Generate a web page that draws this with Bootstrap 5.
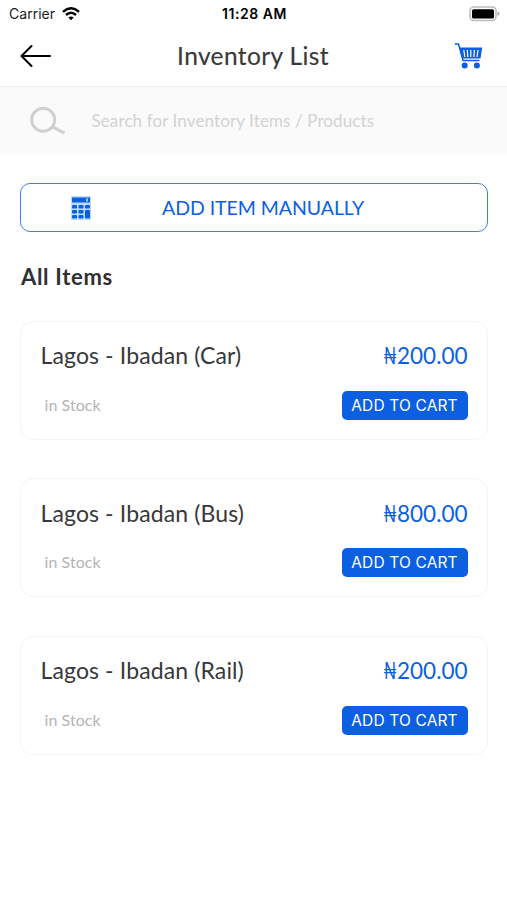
<!DOCTYPE html>
<html lang="en">
<head>
<meta charset="utf-8">
<meta name="viewport" content="width=device-width, initial-scale=1">
<title>Inventory List</title>
<link href="https://cdn.jsdelivr.net/npm/bootstrap@5.3.0/dist/css/bootstrap.min.css" rel="stylesheet">
<style>
  :root { --brand: #0b5fe0; }
  body { font-family: Lato, "Open Sans", sans-serif; color: #38383a; background: #fff; white-space: nowrap; }
  svg { display: block; flex: none; }
  .statusbar { height: 27px; padding: 0 7px 0 9px; font-family: Inter, sans-serif; font-size: 14px; line-height: 27px; color: #1c1c1e; }
  .statusbar .carrier { letter-spacing: .02px; margin-right: -1px; }
  .statusbar .clock { font-size: 14px; letter-spacing: .55px; }
  .titlebar { height: 60px; padding: 0 24px 1px 20px; border-bottom: 1px solid #ececec; }
  .titlebar h1 { font-size: 24.5px; font-weight: 400; -webkit-text-stroke: .15px; letter-spacing: .38px; }
  .searchbar { height: 67px; padding: 0 30px 0 28px; background: #fafafa; gap: 25.5px; }
  .searchbar input, .searchbar input:focus { font-size: 17px; letter-spacing: .11px; color: #999; background: none; box-shadow: none; }
  .searchbar input::placeholder { color: #d2d2d2; opacity: 1; }
  .content { padding: 29px 19.5px 0 20px; }
  .manual { height: 49px; border: 1.5px solid #3f80e6; border-radius: 10px; color: var(--brand); font-size: 19.5px; padding: 1px 50px 0; }
  .manual .label-text { margin-left: 71px; letter-spacing: -.05px; }
  .section-title { font-size: 22px; font-weight: 700; line-height: 30px; margin: 30px 0 28.5px 1px; color: #303033; letter-spacing: .7px; }
  .item { height: 119px; border: 1.5px solid #f4f4f4; border-radius: 13px; padding: 17.5px 19px 19px 19.5px; margin-bottom: 38.6px; }
  .item-name { font-size: 23px; line-height: 33px; letter-spacing: .12px; }
  .price { font-size: 22.5px; line-height: 34px; letter-spacing: -.02px; color: var(--brand); margin-bottom: -2px; }
  .naira { display: inline-block; transform: scaleX(.76); transform-origin: right; margin-right: .5px; }
  .stock { font-size: 16px; color: #b4b4b4; margin: -1px 0 0 4px; letter-spacing: .05px; }
  .cart-btn { height: 29px; width: 126px; padding: 0; border: 0; border-radius: 5px; background: var(--brand); color: #fff; font: 400 15.5px/30px Inter, sans-serif; letter-spacing: .15px; }
</style>
<script src="https://cdn.jsdelivr.net/npm/bootstrap@5.3.0/dist/js/bootstrap.bundle.min.js" defer></script>
</head>
<body>
<div class="statusbar d-flex align-items-center">
  <div class="col d-flex align-items-center gap-2"><span class="carrier">Carrier</span>
    <svg width="18" height="14" viewBox="0 0 18 14" fill="none" stroke="#000" stroke-width="2.500"><path d="M1 4.900Q9-2.300 17 4.900M4 8Q9 3.600 14 8"/><path d="M6.400 10.500Q9 8.300 11.600 10.500L9 13.200Z" fill="#000" stroke="none"/></svg>
  </div>
  <div class="clock fw-semibold text-black">11:28 AM</div>
  <div class="col d-flex justify-content-end">
    <svg width="32" height="16" viewBox="0 0 32 16"><rect x="2" y="1" width="26" height="13.500" rx="4" fill="#fff" stroke="#bdbdbd" stroke-width="1.600"/><rect x="4" y="3.200" width="22" height="9.200" rx="1.500"/><path d="M29.500 5.500q2 .6 2 2.200t-2 2.200z" fill="#aaa"/></svg>
  </div>
</div>
<header class="titlebar d-flex align-items-center justify-content-between">
  <svg width="32" height="24" viewBox="0 0 32 24" fill="none" stroke="#000" stroke-width="2.100" stroke-linecap="round" stroke-linejoin="round"><path d="M30 12H1.500M11.500 2 1.500 12l10 10"/></svg>
  <h1 class="m-0">Inventory List</h1>
  <svg width="29" height="28" viewBox="0 0 29 28" fill="none" stroke="#0b5fe0"><path d="M.8 2h3.700l4.500 16.500h16.500" stroke-width="1.500"/><path fill="#0b5fe0" stroke="none" d="M5.500 5.500h22.700l-1.700 11H8.300z"/><path d="m9.800 8 1 7M13.300 8l.5 7M16.800 8v7M20.400 8l-.5 7M24 8l-1 7" stroke="#fff" stroke-width="1.200"/><circle cx="10.700" cy="23.500" r="3" fill="#0b5fe0" stroke="none"/><circle cx="22.900" cy="23.500" r="3" fill="#0b5fe0" stroke="none"/></svg>
</header>
<div class="searchbar d-flex align-items-center">
  <svg width="38" height="30" viewBox="0 0 38 30" fill="none" stroke="#d0d0d0" stroke-width="3"><circle cx="15.200" cy="13.700" r="11.500"/><path d="m24 20.700 12.500 6.500"/></svg>
  <input class="form-control border-0 p-0" type="text" placeholder="Search for Inventory Items / Products" aria-label="Search">
</div>
<main class="content">
  <button class="manual btn w-100 d-flex align-items-center" type="button">
    <svg width="20" height="24" viewBox="0 0 20 24"><path fill="#b9dcff" d="M0 0h20v24H0z"/><g fill="#0b5fe0"><path d="M1 1.500h18v5H1z"/><rect x="1" y="9" width="5" height="3.500" rx="1"/><rect x="7.500" y="9" width="5" height="3.500" rx="1"/><rect x="14" y="9" width="5" height="3.500" rx="1"/><rect x="1" y="14" width="5" height="3.500" rx="1"/><rect x="7.500" y="14" width="5" height="3.500" rx="1"/><rect x="14" y="14" width="5" height="8.500" rx="1"/><rect x="1" y="19" width="5" height="3.500" rx="1"/><rect x="7.500" y="19" width="5" height="3.500" rx="1"/></g><path fill="#9dcbff" d="M15 2.500h2v3h-2z"/></svg>
    <span class="label-text">ADD ITEM MANUALLY</span>
  </button>
  <h2 class="section-title">All Items</h2>
  <div class="item card justify-content-between">
    <div class="d-flex justify-content-between"><span class="item-name">Lagos - Ibadan (Car)</span><span class="price"><span class="naira">₦</span>200.00</span></div>
    <div class="d-flex justify-content-between align-items-center"><span class="stock">in Stock</span><button class="cart-btn btn" type="button">ADD TO CART</button></div>
  </div>
  <div class="item card justify-content-between">
    <div class="d-flex justify-content-between"><span class="item-name">Lagos - Ibadan (Bus)</span><span class="price"><span class="naira">₦</span>800.00</span></div>
    <div class="d-flex justify-content-between align-items-center"><span class="stock">in Stock</span><button class="cart-btn btn" type="button">ADD TO CART</button></div>
  </div>
  <div class="item card justify-content-between">
    <div class="d-flex justify-content-between"><span class="item-name">Lagos - Ibadan (Rail)</span><span class="price"><span class="naira">₦</span>200.00</span></div>
    <div class="d-flex justify-content-between align-items-center"><span class="stock">in Stock</span><button class="cart-btn btn" type="button">ADD TO CART</button></div>
  </div>
</main>
</body>
</html>
